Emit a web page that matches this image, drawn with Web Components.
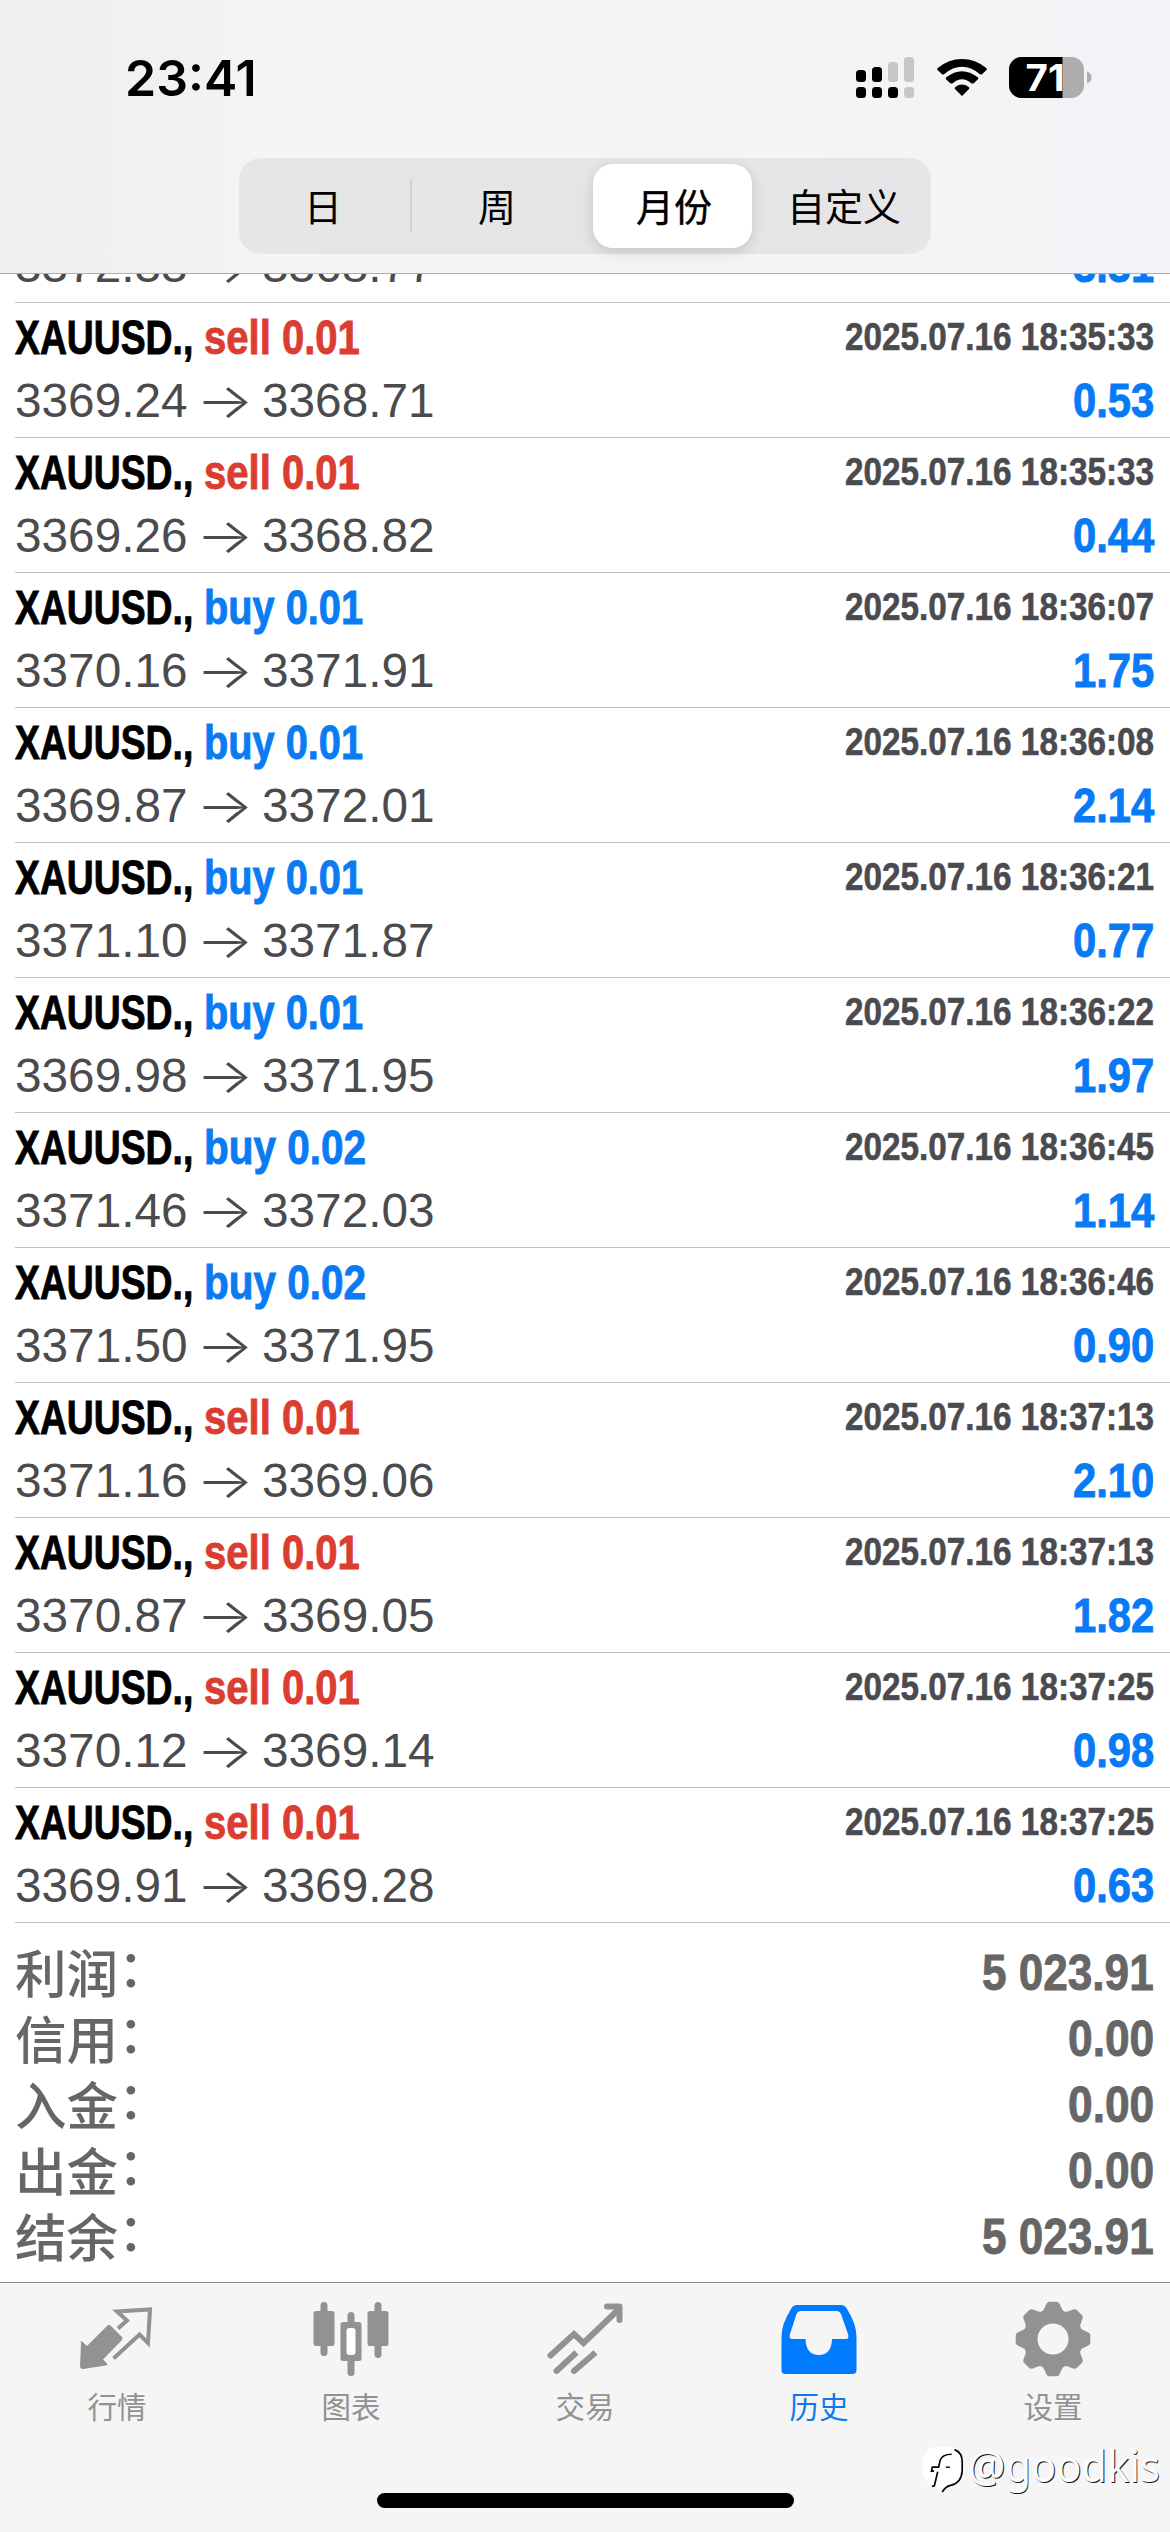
<!DOCTYPE html>
<html lang="zh-CN">
<head>
<meta charset="utf-8">
<title>历史</title>
<style>
html,body{margin:0;padding:0;background:#fff}
body{width:1170px;height:2532px;overflow:hidden;font-family:"Liberation Sans","Noto Sans CJK SC",sans-serif}
</style>
</head>
<body>
<history-app></history-app>
<script>
const CJK='"Noto Sans CJK SC",sans-serif';
function define(name,html,after){
  const t=document.createElement('template');t.innerHTML=html;
  customElements.define(name,class extends HTMLElement{
    constructor(){super();this.attachShadow({mode:'open'}).appendChild(t.content.cloneNode(true));}
    connectedCallback(){if(after)after(this,this.shadowRoot);}
  });
}

/* Text squeezed or stretched horizontally to a given width */
define('fit-text',`<style>
:host{display:block;white-space:pre;flex:none}
span{display:inline-block;transform-origin:0 50%}
</style><span></span>`,(el,r)=>{
  const s=r.querySelector('span');s.textContent=el.getAttribute('text');
  const w=+el.getAttribute('w');
  el.style.width=w+'px';
  const natural=s.offsetWidth;
  if(natural)s.style.transform='scaleX('+(w/natural)+')';
});

define('status-bar',`<style>
:host{display:flex;height:158px;box-sizing:border-box;padding:48px 78px 0 125px;justify-content:space-between;align-items:flex-start}
fit-text{font:600 50px/60px Inter,sans-serif;color:#000}
.icons{display:flex;align-items:flex-start;padding-top:9px;height:42px}
svg{display:block;flex:none}
.sig{margin-right:22px}.wifi{margin-right:22px}
</style>
<fit-text text="23:41" w="132"></fit-text>
<div class="icons">
<svg class="sig" width="59" height="42" viewBox="0 0 59 42"><g fill="#000"><rect x="0" y="13" width="10" height="12" rx="3.5"/><rect x="16" y="10" width="10" height="15" rx="3.5"/><rect x="0" y="30" width="10" height="11" rx="3.5"/><rect x="16" y="30" width="10" height="11" rx="3.5"/><rect x="32" y="30" width="10" height="11" rx="3.5"/></g><g fill="#c6c6c6"><rect x="32" y="5" width="10" height="20" rx="3.5"/><rect x="48" y="0" width="10" height="25" rx="3.5"/><rect x="48" y="30" width="10" height="11" rx="3.5"/></g></svg>
<svg class="wifi" width="50" height="42" viewBox="0 0 50 42"><path d="M25 39 L18 32 Q17 30.800 18.300 29.900 Q25 25 31.700 29.900 Q33 30.800 32 32Z"/><path d="M9 22.300 L13.300 26.200 Q14.500 27 15.700 26.200 Q25 18.500 34.300 26.200 Q35.500 27 36.700 26.200 L41 22.300 Q41.800 21.300 40.800 20.300 Q25 8 9.200 20.300 Q8.200 21.300 9 22.300Z"/><path d="M.5 13 L5 17.200 Q6 18 7.100 17.200 Q25 2.500 42.900 17.200 Q44 18 45 17.200 L49.500 13 Q50.200 12 49.300 11.100 Q38.500 2 25 2 Q11.500 2 .7 11.100 Q-.2 12 .5 13Z"/></svg>
<svg class="bat" width="83" height="42" viewBox="0 0 83 42"><defs><clipPath id="b"><rect x="0" y="0" width="75" height="41" rx="12.500"/></clipPath></defs><g clip-path="url(#b)"><rect width="75" height="41" fill="#adadad"/><rect width="53.500" height="41" fill="#000"/></g><path d="M78 14.500 Q82.500 16 82.500 20.500 Q82.500 25 78 26.500Z" fill="#adadad"/><text x="36" y="34" text-anchor="middle" textLength="39" lengthAdjust="spacingAndGlyphs" font-family="Inter,sans-serif" font-weight="700" font-size="37" fill="#fff">71</text></svg>
</div>`);

define('segment-control',`<style>
:host{display:flex;width:692px;height:96px;margin:0 auto;border-radius:22px;background:linear-gradient(90deg,#e7e5e6,#e5e5e7 50%,#e6e6e9);align-items:center}
span{flex:0 0 172px;height:96px;display:flex;align-items:center;justify-content:center;font:400 38px/56px ${CJK};color:#000;box-sizing:border-box;padding-bottom:2px}
.on{margin:0 6px 0 10px;height:84px;border-radius:20px;background:#fff;box-shadow:0 4px 14px rgba(0,0,0,.14);flex:0 0 159px;padding-left:3px;-webkit-text-stroke:.4px #000}
.first{padding-right:4px}
i{width:2px;height:54px;margin:0 -1px;border-radius:1px;background:#d0d0d1}
</style><span class="first">日</span><i></i><span>周</span><span class="on">月份</span><span>自定义</span>`);

define('app-header',`<style>
:host{display:block;height:273px;border-bottom:1px solid #adadad;background:linear-gradient(90deg,#eff0f0 0,#f2f1f2 16%,#f7f4f4 24%,#f5f5f5 42%,#f4f4f5 78%,#f2f3f7 100%)}
</style><slot></slot>`);

define('deal-row',`<style>
:host{display:block;flex:none;height:135px;box-sizing:border-box;padding:3px 16px 0 0;margin-left:15px;border-bottom:1px solid #bfbfc1;font-size:48px;line-height:56px}
.line{display:flex;height:63px;justify-content:space-between;align-items:center}
.l{display:flex}
.bold{font-family:"Liberation Sans Narrow","Liberation Sans",sans-serif;font-weight:700;-webkit-text-stroke:.9px currentColor}
.date{font-size:39px;line-height:50px;color:#4b4b4f;margin-top:-2px;-webkit-text-stroke-width:.6px}
.price{color:#4b4b4d}
.arrow{font-family:Inter,sans-serif;font-weight:300;margin:0 8px 0 8px}
.profit{color:#077af6}
</style>
<div class="line"><div class="l bold" id="head"></div><b id="date" class="bold date"></b></div>
<div class="line"><div class="l price" id="price"></div><b id="profit" class="bold profit"></b></div>`,(el,r)=>{
  const [side,from,to,date,profit]=el.getAttribute('data').split('|');
  const fit=(t,w,c,s)=>`<fit-text class="${c||''}" style="${s||''}" text="${t}" w="${w}"></fit-text>`;
  if(side){
    const sell=side[0]=='s';
    r.getElementById('head').innerHTML=fit('XAUUSD.,',178,'','margin-right:11px')+fit(side,sell?156:/2$/.test(side)?162:159,'','color:'+(sell?'#db3d31':'#0a7bf2'));
    r.getElementById('date').innerHTML=fit(date,309);
  }
  r.getElementById('price').innerHTML=fit(from,173)+fit('→',58,'arrow')+fit(to,173);
  r.getElementById('profit').innerHTML=fit(profit,81);
});

define('deal-list',`<style>
:host{display:flex;flex-direction:column;justify-content:flex-end;height:1649px;overflow:hidden}
</style><slot></slot>`);

define('summary-row',`<style>
:host{display:flex;justify-content:space-between;align-items:center;height:66px;color:#666}
.k{font:500 51.500px/54px ${CJK};display:flex;padding-bottom:5px}
.c{margin-top:-6px}
fit-text{font-family:"Liberation Sans Narrow","Liberation Sans",sans-serif;font-weight:700;font-size:50px;line-height:58px;-webkit-text-stroke:.9px currentColor}
</style><span class="k"><span id="k"></span><span class="c">：</span></span><span id="v"></span>`,(el,r)=>{
  r.getElementById('k').textContent=el.getAttribute('k');
  const v=el.getAttribute('v');
  r.getElementById('v').innerHTML=`<fit-text text="${v}" w="${v.length>4?172:86}"></fit-text>`;
});

define('summary-panel',`<style>:host{display:block;height:359px;box-sizing:border-box;padding:17px 16px 0 15px}</style><slot></slot>`);

define('tab-item',`<style>
:host{flex:1;display:flex;flex-direction:column;align-items:center;color:#929292}
:host([on]){color:#0f7aee}
::slotted(svg){display:block;width:76px;height:76px;margin-top:18px}
span{font:400 29.500px/36px ${CJK};margin-top:10px}
</style><slot></slot><span></span>`,(el,r)=>{r.querySelector('span').textContent=el.getAttribute('label');});

define('tab-bar',`<style>
:host{display:block;height:250px;box-sizing:border-box;border-top:1px solid #8c8c8e;background:#f5f5f5}
.tabs{display:flex;height:210px}
.home{width:417px;height:15px;border-radius:8px;background:#000;margin:0 auto}
</style><div class="tabs"><slot></slot></div><div class="home"></div>`);

define('water-mark',`<style>
:host{position:absolute;left:920px;top:2437px;display:flex;align-items:center;height:56px}
svg{display:block;width:45px;height:48px;margin-right:3px;margin-top:7px}
fit-text{font:400 44px/56px "Noto Sans",sans-serif;color:#fbfbfb;text-shadow:1px 1px 0 #111}
</style><svg viewBox="30 45 135 145"><path d="M85 50 C55 50 36 68 36 108 C36 145 52 166 78 172 C100 178 112 170 125 164 C150 152 159 135 159 105 C159 70 140 50 110 50Z" fill="#fff"/><g fill="none" stroke="#000" stroke-width="5"><path d="M134 59 Q157 68 157 96 V122 Q155 160 122 167 Q107 170 97 187"/><path d="M125 73 Q96 73 90 92 L86 112 H67 L64 124 H72 M83 126 L73 168 L66 170"/><path d="M107 112 H120" stroke-width="4"/></g></svg><fit-text text="@goodkis" w="192"></fit-text>`);

const DEALS=[
'|3372.33|3368.77||3.31',
'sell 0.01|3369.24|3368.71|2025.07.16 18:35:33|0.53',
'sell 0.01|3369.26|3368.82|2025.07.16 18:35:33|0.44',
'buy 0.01|3370.16|3371.91|2025.07.16 18:36:07|1.75',
'buy 0.01|3369.87|3372.01|2025.07.16 18:36:08|2.14',
'buy 0.01|3371.10|3371.87|2025.07.16 18:36:21|0.77',
'buy 0.01|3369.98|3371.95|2025.07.16 18:36:22|1.97',
'buy 0.02|3371.46|3372.03|2025.07.16 18:36:45|1.14',
'buy 0.02|3371.50|3371.95|2025.07.16 18:36:46|0.90',
'sell 0.01|3371.16|3369.06|2025.07.16 18:37:13|2.10',
'sell 0.01|3370.87|3369.05|2025.07.16 18:37:13|1.82',
'sell 0.01|3370.12|3369.14|2025.07.16 18:37:25|0.98',
'sell 0.01|3369.91|3369.28|2025.07.16 18:37:25|0.63'];
const SUMS=[['利润','5 023.91'],['信用','0.00'],['入金','0.00'],['出金','0.00'],['结余','5 023.91']];
const gear=(()=>{let d='';const P=(r,a)=>(38+r*Math.sin(a)).toFixed(2)+' '+(38-r*Math.cos(a)).toFixed(2);
  for(let i=0;i<8;i++){const a=i*Math.PI/4;
    d+=(i?'L':'M')+P(30,a-.34)+'Q'+P(31,a-.3)+' '+P(34,a-.22)+'Q'+P(37.5,a-.17)+' '+P(37.5,a-.1)+'L'+P(37.5,a+.1)+'Q'+P(37.5,a+.17)+' '+P(34,a+.22)+'Q'+P(31,a+.3)+' '+P(30,a+.34);}
  return d+'Z M53.5 38A15.5 15.5 0 1 0 22.5 38A15.5 15.5 0 1 0 53.5 38Z';})();

define('history-app',`<style>:host{display:block;width:1170px;height:2532px;position:relative;background:#fff;font-family:"Liberation Sans","Noto Sans CJK SC",sans-serif}</style>
<app-header><status-bar></status-bar><segment-control></segment-control></app-header>
<deal-list>${DEALS.map(d=>`<deal-row data="${d}"></deal-row>`).join('')}</deal-list>
<summary-panel>${SUMS.map(s=>`<summary-row k="${s[0]}" v="${s[1]}"></summary-row>`).join('')}</summary-panel>
<tab-bar>
<tab-item label="行情"><svg viewBox="0 0 76 76"><path d="M2 42.500 Q1 39 3 40.500 L8 45 L28.500 24.500 Q30 23 31.500 24.500 L43 36 Q44 37.500 43 39 L24 58.500 L28 62.500 Q29 64 27 64.500 L4 68 Q1 68 1 65Z" fill="currentColor"/><path d="M39 27.500 L48 19.500 L38 10.500 L71 8.500 L69 42 L60.500 33.500 L34.500 57.500" fill="none" stroke="currentColor" stroke-width="4"/></svg></tab-item>
<tab-item label="图表"><svg viewBox="0 0 76 76"><g fill="currentColor"><rect x="7.500" y="1" width="7" height="54" rx="3.500"/><rect x=".5" y="10" width="21" height="35" rx="2.500"/><rect x="61.500" y="1" width="7" height="56" rx="3.500"/><rect x="54.500" y="10" width="21" height="35" rx="2.500"/><rect x="34.500" y="11" width="7" height="64" rx="3.500"/><rect x="27.500" y="21" width="21" height="39" rx="2.500"/></g><rect x="33.500" y="27" width="9" height="27" rx="3" fill="#fff"/></svg></tab-item>
<tab-item label="交易"><svg viewBox="0 0 76 76" fill="none" stroke="currentColor" stroke-width="6" stroke-linecap="round"><path d="M3.500 54.500 L27 33 L36.500 42 L72 8"/><path d="M60 5.500 H72.500 V19" stroke-linejoin="round"/><g stroke-linecap="butt"><path d="M9.500 70 L29.500 51.500 M27 70 L48.500 51.500"/></g><path d="M9.500 70 L10 69.500 M27 70 L27.500 69.500"/></svg></tab-item>
<tab-item label="历史" on><svg viewBox="0 0 76 76"><path fill="#007aff" fill-rule="evenodd" d="M16 4 H60 Q64 4 66 8 Q75.500 23 75.500 36 V69 Q75.500 73 71.500 73 H4.500 Q.5 73 .5 69 V36 Q.5 23 10 8 Q12 4 16 4Z M20 10 Q17 10 15.500 13 L9 33 Q7.500 38 11 38 H24.500 Q25 54 37.800 54 Q50.500 54 51 38 H65 Q68.500 38 67 33 L60 13 Q58.500 10 56 10Z"/></svg></tab-item>
<tab-item label="设置"><svg viewBox="0 0 76 76"><path fill="currentColor" fill-rule="evenodd" d="${gear}"/></svg></tab-item>
</tab-bar>
<water-mark></water-mark>`);
</script>
</body>
</html>
